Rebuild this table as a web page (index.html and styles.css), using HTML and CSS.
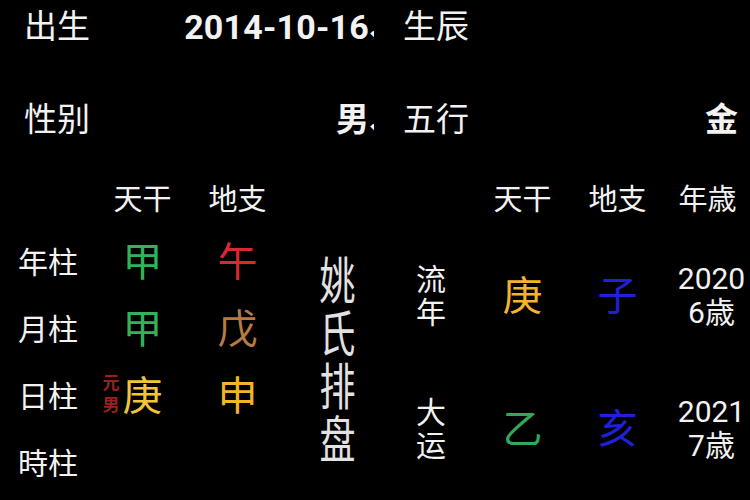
FILE: index.html
```html
<!DOCTYPE html>
<html lang="zh">
<head>
<meta charset="utf-8">
<link rel="stylesheet" href="styles.css">
</head>
<body>
<div class="page">
  <div class="info">
    <div class="half left">
      <span class="label">出生</span>
      <span class="value"><b class="date">2014-10-16</b><b class="cut">、</b></span>
    </div>
    <div class="half right">
      <span class="label">生辰</span>
      <span class="value"></span>
    </div>
    <div class="half left">
      <span class="label">性别</span>
      <span class="value"><b>男</b><b class="cut">、</b></span>
    </div>
    <div class="half right">
      <span class="label">五行</span>
      <span class="value"><b>金</b></span>
    </div>
  </div>

  <div class="board">
    <div class="head c2">天干</div>
    <div class="head c3">地支</div>
    <div class="head c6">天干</div>
    <div class="head c7">地支</div>
    <div class="head c8">年歳</div>

    <div class="row-label r2">年柱</div>
    <div class="gz c2 r2 green">甲</div>
    <div class="gz c3 r2 red">午</div>

    <div class="row-label r3">月柱</div>
    <div class="gz c2 r3 green">甲</div>
    <div class="gz c3 r3 brown">戊</div>

    <div class="row-label r4">日柱</div>
    <div class="gz c2 r4 yellow day"><span class="yuan">元<br>男</span>庚</div>
    <div class="gz c3 r4 gold">申</div>

    <div class="row-label r5">時柱</div>

    <div class="title">姚氏排盘</div>

    <div class="side c5 ra">流<br>年</div>
    <div class="gz c6 ra gold">庚</div>
    <div class="gz c7 ra blue">子</div>
    <div class="age c8 ra">2020<br>6歳</div>

    <div class="side c5 rb">大<br>运</div>
    <div class="gz c6 rb green2">乙</div>
    <div class="gz c7 rb blue">亥</div>
    <div class="age c8 rb">2021<br>7歳</div>
  </div>
</div>
</body>
</html>
```

FILE: styles.css
```css
* { box-sizing: border-box; }
html, body {
  margin: 0;
  padding: 0;
  background: #000;
}
body {
  width: 750px;
  height: 500px;
  overflow: hidden;
  color: #f2f2f2;
  font-family: "Roboto", "Noto Sans CJK SC", sans-serif;
}
.page {
  width: 750px;
  height: 500px;
}

/* ---------- info rows ---------- */
.info {
  display: grid;
  grid-template-columns: 400px 350px;
  grid-template-rows: 54px 54px;
  row-gap: 39px;
  height: 175px;
}
.half {
  display: flex;
  align-items: center;
  justify-content: space-between;
}
.half.left { padding-left: 24px; padding-right: 26px; }
.half.right { padding-left: 3px; padding-right: 12px; }
.label {
  font-size: 33px;
  line-height: 40px;
  white-space: nowrap;
}
.value {
  display: flex;
  align-items: center;
  white-space: nowrap;
  font-size: 33px;
  line-height: 40px;
  overflow: hidden;
}
.value b { font-weight: 700; }
.date {
  font-size: 34px;
  letter-spacing: 0.2px;
}
.cut {
  display: inline-block;
  width: 30px;
  margin-right: -25px;
  font-size: 30px;
}

/* ---------- board ---------- */
.board {
  display: grid;
  grid-template-columns: 95px 95px 95px 100px 90px 95px 95px 85px;
  grid-template-rows: 54px 67px 67px 67px 67px;
  align-items: center;
  justify-items: center;
}
.head {
  grid-row: 1;
  font-size: 29px;
  line-height: 34px;
  align-self: start;
  margin-top: 8px;
}
.c2 { grid-column: 2; }
.c3 { grid-column: 3; }
.c5 { grid-column: 5; }
.c6 { grid-column: 6; }
.c7 { grid-column: 7; }
.c8 { grid-column: 8; }
.r2 { grid-row: 2; }
.r3 { grid-row: 3; }
.r4 { grid-row: 4; }
.r5 { grid-row: 5; }
.ra { grid-row: 2 / span 2; }
.rb { grid-row: 4 / span 2; }

.row-label {
  grid-column: 1;
  justify-self: start;
  padding-left: 18px;
  font-size: 30px;
  line-height: 36px;
}
.gz {
  font-size: 40px;
  line-height: 44px;
  position: relative;
}
.yuan {
  position: absolute;
  right: 100%;
  top: -3px;
  margin-right: 3px;
  font-size: 17px;
  line-height: 22px;
  font-weight: 700;
  color: #9e1f22;
}
.title {
  grid-column: 4;
  grid-row: 2 / span 4;
  writing-mode: vertical-rl;
  font-size: 50px;
  line-height: 50px;
  letter-spacing: 3px;
  color: #e2e2e2;
  transform: scaleX(0.72);
  margin-top: -4px;
  margin-left: -2px;
}
.side {
  font-size: 30px;
  line-height: 33px;
  margin-left: 2px;
}
.age {
  font-size: 30px;
  line-height: 34px;
  text-align: center;
  margin-left: 8px;
}
.rb.age, .rb.side { margin-top: -2px; }
.ra.gz { margin-top: 2px; }

.green { color: #2fb45c; }
.green2 { color: #31a85a; }
.red { color: #d42a30; }
.brown { color: #b67a45; }
.yellow { color: #f2c43a; }
.gold { color: #f2b42c; }
.blue { color: #2020d8; }
```
